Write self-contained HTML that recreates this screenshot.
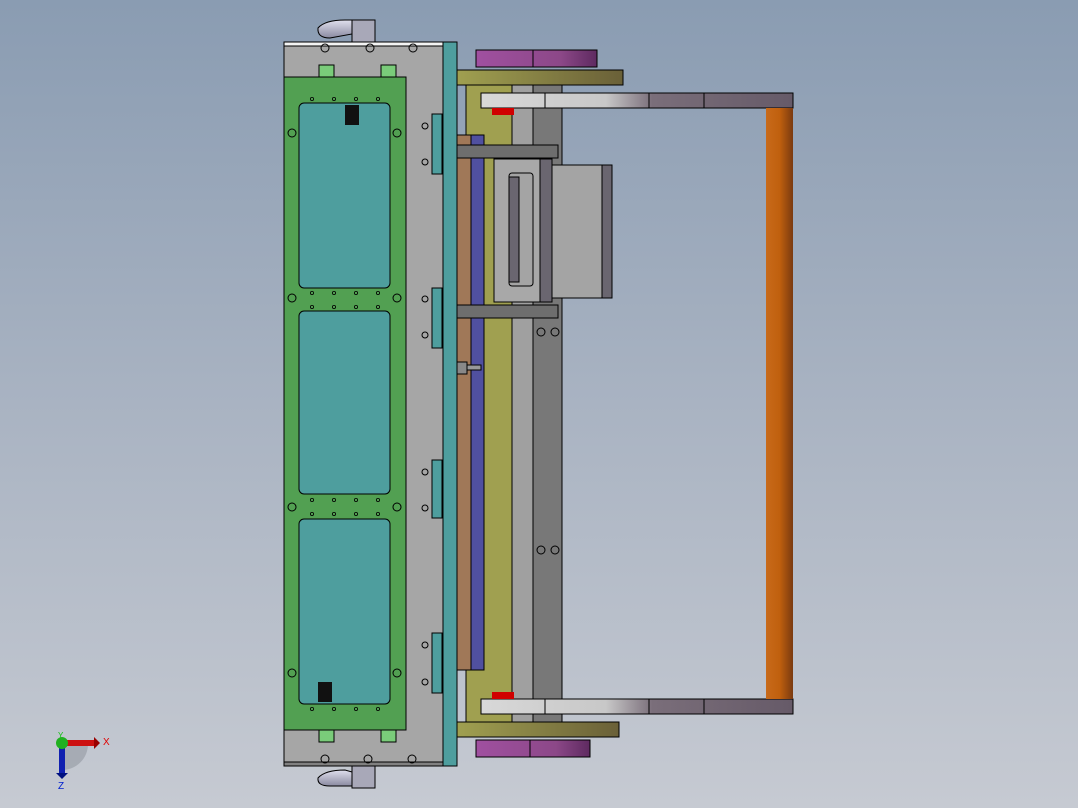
<!DOCTYPE html>
<html><head><style>
html,body{margin:0;padding:0;width:1078px;height:808px;overflow:hidden}
body{background:linear-gradient(#8a9cb2 0%,#a9b3c2 50%,#c6cad2 100%);}
svg{position:absolute;left:0;top:0}
text{font-family:"Liberation Sans",sans-serif}
</style></head><body>
<svg width="1078" height="808" viewBox="0 0 1078 808">
<defs>
<linearGradient id="bar" x1="0" x2="1"><stop offset="0" stop-color="#d8d8d8"/><stop offset="0.4" stop-color="#c8c8c8"/><stop offset="0.55" stop-color="#7a6e7a"/><stop offset="1" stop-color="#665a68"/></linearGradient>
<linearGradient id="org" x1="0" x2="1"><stop offset="0" stop-color="#c86a1a"/><stop offset="0.5" stop-color="#c0600e"/><stop offset="1" stop-color="#7a3a10"/></linearGradient>
<linearGradient id="oliv" x1="0" x2="1"><stop offset="0" stop-color="#a0a050"/><stop offset="1" stop-color="#6a6038"/></linearGradient>
<linearGradient id="purp" x1="0" x2="1"><stop offset="0" stop-color="#a050a0"/><stop offset="0.7" stop-color="#8c4888"/><stop offset="1" stop-color="#5e2a60"/></linearGradient>
<linearGradient id="hinge" x1="0" x2="0" y1="0" y2="1"><stop offset="0" stop-color="#e0e0ee"/><stop offset="1" stop-color="#8a8aa0"/></linearGradient>
</defs>
<g stroke="#000" stroke-width="1">
<path d="M318 28 Q325 20 345 20 L352 20 L352 34 L330 38 Q317 38 318 28Z" fill="url(#hinge)"/>
<rect x="352" y="20" width="23" height="22" fill="#a8a8b8"/>
<path d="M318 778 Q325 770 345 770 L352 772 L352 786 L330 786 Q317 786 318 778Z" fill="url(#hinge)"/>
<rect x="352" y="766" width="23" height="22" fill="#a8a8b8"/>
<rect x="476" y="50" width="121" height="17" fill="url(#purp)"/>
<line x1="533" y1="50" x2="533" y2="67"/>
<rect x="476" y="740" width="114" height="17" fill="url(#purp)"/>
<line x1="530" y1="740" x2="530" y2="757"/>
<rect x="457" y="70" width="166" height="15" fill="url(#oliv)"/>
<rect x="457" y="722" width="162" height="15" fill="url(#oliv)"/>
<rect x="466" y="85" width="46" height="637" fill="#a0a050"/>
<rect x="512" y="85" width="21" height="637" fill="#a0a0a0"/>
<rect x="533" y="85" width="29" height="637" fill="#787878"/>
<rect x="457" y="135" width="14" height="535" fill="#a07858"/>
<rect x="471" y="135" width="13" height="535" fill="#5050a0"/>
<rect x="481" y="93" width="312" height="15" fill="url(#bar)"/>
<line x1="545" y1="93" x2="545" y2="108"/><line x1="649" y1="93" x2="649" y2="108"/><line x1="704" y1="93" x2="704" y2="108"/>
<rect x="481" y="699" width="312" height="15" fill="url(#bar)"/>
<line x1="545" y1="699" x2="545" y2="714"/><line x1="649" y1="699" x2="649" y2="714"/><line x1="704" y1="699" x2="704" y2="714"/>
<rect x="492" y="108" width="22" height="7" fill="#d00000" stroke="none"/>
<rect x="492" y="692" width="22" height="7" fill="#d00000" stroke="none"/>
<rect x="766" y="108" width="27" height="591" fill="url(#org)" stroke="none"/>
<rect x="457" y="145" width="101" height="13" fill="#6e6e6e"/>
<rect x="457" y="305" width="101" height="13" fill="#6e6e6e"/>
<rect x="552" y="165" width="60" height="133" fill="#a4a4a4"/>
<rect x="602" y="165" width="10" height="133" fill="#6a6670"/>
<rect x="494" y="159" width="58" height="143" fill="#a8a8a8"/>
<rect x="540" y="159" width="12" height="143" fill="#6a6670"/>
<rect x="509" y="173" width="24" height="113" rx="3" fill="#a4a4a4"/>
<rect x="509" y="177" width="10" height="105" fill="#6a6670"/>
<rect x="457" y="362" width="10" height="12" fill="#888"/>
<rect x="467" y="365" width="14" height="5" fill="#999"/>
<rect x="284" y="42" width="160" height="724" fill="#a6a6a6"/>
<rect x="284" y="42" width="160" height="4" fill="#f4f4f4"/>
<rect x="284" y="762" width="160" height="4" fill="#808080"/>
<rect x="443" y="42" width="14" height="724" fill="#4e9e9e"/>
<rect x="432" y="114" width="10" height="60" fill="#4e9e9e"/>
<rect x="432" y="288" width="10" height="60" fill="#4e9e9e"/>
<rect x="432" y="460" width="10" height="58" fill="#4e9e9e"/>
<rect x="432" y="633" width="10" height="60" fill="#4e9e9e"/>
<rect x="319" y="65" width="15" height="12" fill="#7acc7a"/>
<rect x="381" y="65" width="15" height="12" fill="#7acc7a"/>
<rect x="319" y="730" width="15" height="12" fill="#7acc7a"/>
<rect x="381" y="730" width="15" height="12" fill="#7acc7a"/>
<rect x="284" y="77" width="122" height="653" fill="#52a052"/>
<rect x="299" y="103" width="91" height="185" rx="5" fill="#4e9e9e"/>
<rect x="299" y="311" width="91" height="183" rx="5" fill="#4e9e9e"/>
<rect x="299" y="519" width="91" height="185" rx="5" fill="#4e9e9e"/>
</g>
<g fill="none" stroke="#000" stroke-width="1">
<circle cx="325" cy="48" r="4"/><circle cx="370" cy="48" r="4"/><circle cx="413" cy="48" r="4"/>
<circle cx="325" cy="759" r="4"/><circle cx="368" cy="759" r="4"/><circle cx="412" cy="759" r="4"/>
<circle cx="292" cy="133" r="4"/><circle cx="397" cy="133" r="4"/>
<circle cx="292" cy="298" r="4"/><circle cx="397" cy="298" r="4"/>
<circle cx="292" cy="507" r="4"/><circle cx="397" cy="507" r="4"/>
<circle cx="292" cy="673" r="4"/><circle cx="397" cy="673" r="4"/>
<circle cx="541" cy="332" r="4"/><circle cx="555" cy="332" r="4"/>
<circle cx="541" cy="550" r="4"/><circle cx="555" cy="550" r="4"/>
<circle cx="425" cy="126" r="3"/><circle cx="425" cy="162" r="3"/><circle cx="425" cy="299" r="3"/><circle cx="425" cy="335" r="3"/>
<circle cx="425" cy="472" r="3"/><circle cx="425" cy="508" r="3"/><circle cx="425" cy="645" r="3"/><circle cx="425" cy="682" r="3"/>
<g stroke-width="0.8">
<circle cx="312" cy="99" r="1.6"/><circle cx="334" cy="99" r="1.6"/><circle cx="356" cy="99" r="1.6"/><circle cx="378" cy="99" r="1.6"/>
<circle cx="312" cy="293" r="1.6"/><circle cx="334" cy="293" r="1.6"/><circle cx="356" cy="293" r="1.6"/><circle cx="378" cy="293" r="1.6"/>
<circle cx="312" cy="307" r="1.6"/><circle cx="334" cy="307" r="1.6"/><circle cx="356" cy="307" r="1.6"/><circle cx="378" cy="307" r="1.6"/>
<circle cx="312" cy="500" r="1.6"/><circle cx="334" cy="500" r="1.6"/><circle cx="356" cy="500" r="1.6"/><circle cx="378" cy="500" r="1.6"/>
<circle cx="312" cy="514" r="1.6"/><circle cx="334" cy="514" r="1.6"/><circle cx="356" cy="514" r="1.6"/><circle cx="378" cy="514" r="1.6"/>
<circle cx="312" cy="709" r="1.6"/><circle cx="334" cy="709" r="1.6"/><circle cx="356" cy="709" r="1.6"/><circle cx="378" cy="709" r="1.6"/>
</g>
</g>
<rect x="345" y="105" width="14" height="20" fill="#111"/>
<rect x="318" y="682" width="14" height="20" fill="#111"/>
<path d="M62 744 L62 770 A26 26 0 0 0 88 744Z" fill="#9aa0a8" opacity="0.7"/>
<rect x="62" y="740" width="32" height="6" fill="#cc1010"/>
<path d="M94 737 L100 743 L94 749Z" fill="#990000"/>
<rect x="59" y="743" width="6" height="30" fill="#1020b0"/>
<path d="M56 773 L68 773 L62 779Z" fill="#001080"/>
<circle cx="62" cy="743" r="6" fill="#20b020"/>
<text x="103" y="745" font-size="10" fill="#e00000">X</text>
<text x="58" y="789" font-size="10" fill="#0020d0">Z</text>
<text x="58" y="738" font-size="8" fill="#10c010">Y</text>
</svg>
</body></html>
